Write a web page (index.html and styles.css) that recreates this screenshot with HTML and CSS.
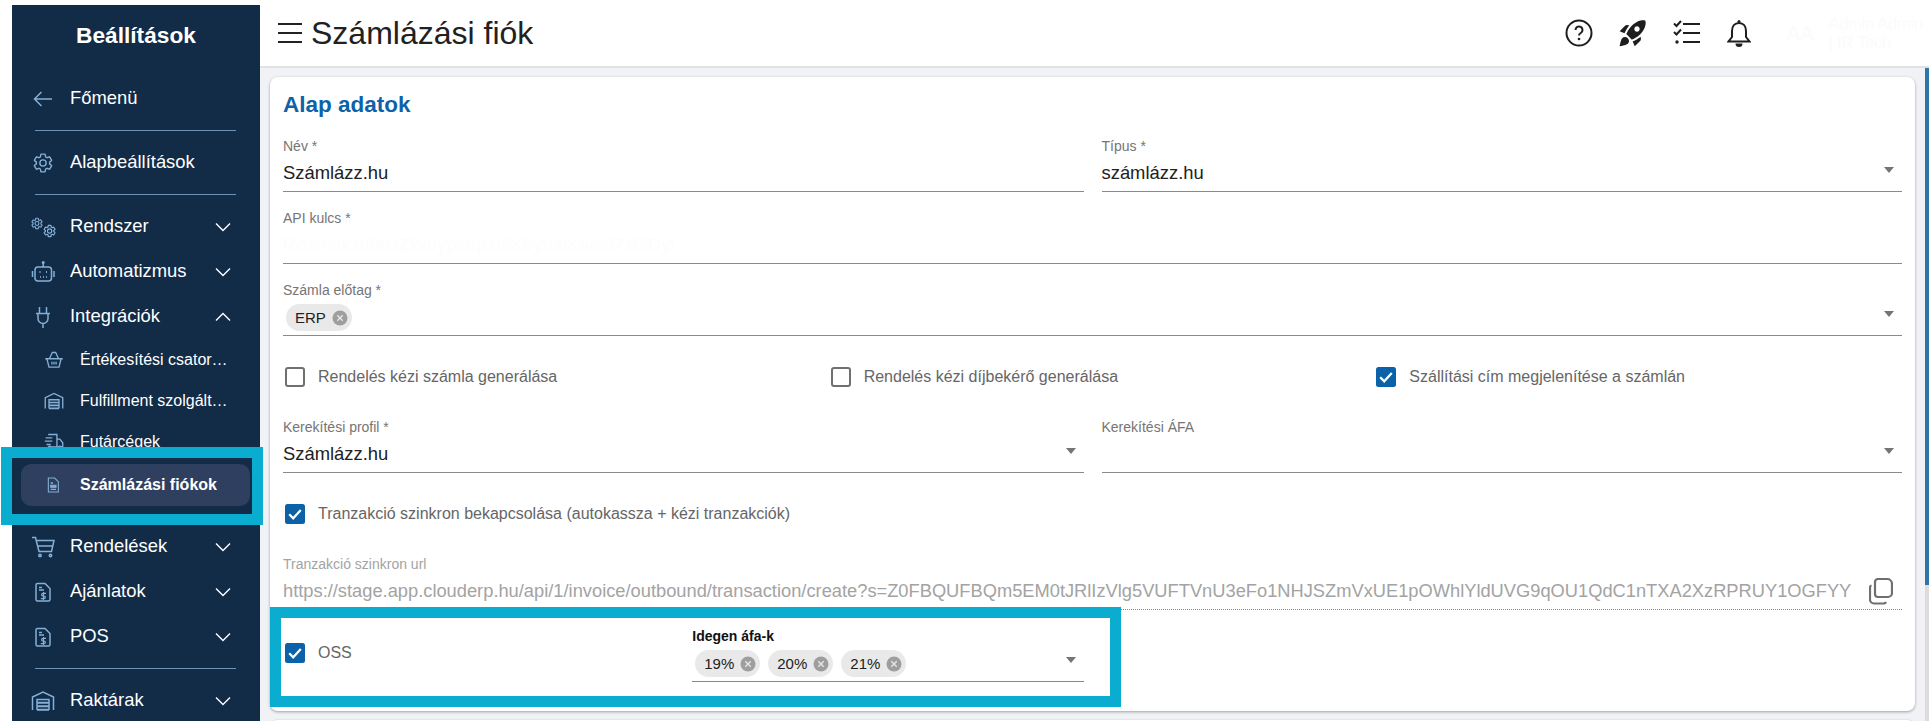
FILE: index.html
```html
<!DOCTYPE html>
<html lang="hu">
<head>
<meta charset="utf-8">
<title>Számlázási fiók</title>
<link rel="stylesheet" href="styles.css">
</head>
<body>
<svg class="defs" width="0" height="0" aria-hidden="true">
  <symbol id="chev-d" viewBox="0 0 16 16"><path d="M1 4.500l7 7 7-7"/></symbol>
  <symbol id="chev-u" viewBox="0 0 16 16"><path d="M1 11.500l7-7 7 7"/></symbol>
  <symbol id="gear" viewBox="-1 -1 26 26"><path d="M19.140 12.940c.04-.3.06-.61.06-.94 0-.32-.02-.64-.07-.94l2.030-1.580c.18-.14.23-.41.12-.61l-1.920-3.320c-.12-.22-.37-.29-.59-.22l-2.390.96c-.5-.38-1.030-.7-1.620-.94L14.400 2.810c-.04-.24-.24-.41-.48-.41h-3.840c-.24 0-.43.17-.47.41L9.250 5.350c-.59.24-1.130.57-1.620.94l-2.390-.96c-.22-.08-.47 0-.59.22L2.740 8.870c-.12.21-.08.47.12.61l2.030 1.580c-.05.3-.09.63-.09.94s.02.64.07.94l-2.030 1.580c-.18.14-.23.41-.12.61l1.920 3.320c.12.22.37.29.59.22l2.390-.96c.5.38 1.030.7 1.620.94l.36 2.540c.05.24.24.41.48.41h3.840c.24 0 .44-.17.47-.41l.36-2.540c.59-.24 1.130-.56 1.620-.94l2.390.96c.22.08.47 0 .59-.22l1.920-3.320c.12-.22.07-.47-.12-.61l-2.010-1.580z"/><circle cx="12" cy="12" r="3.400"/></symbol>
  <symbol id="gear-s" viewBox="0 0 24 24"><path stroke-width="2" d="M19.140 12.940c.04-.3.06-.61.06-.94 0-.32-.02-.64-.07-.94l2.030-1.580c.18-.14.23-.41.12-.61l-1.920-3.320c-.12-.22-.37-.29-.59-.22l-2.390.96c-.5-.38-1.030-.7-1.620-.94L14.400 2.810c-.04-.24-.24-.41-.48-.41h-3.840c-.24 0-.43.17-.47.41L9.250 5.350c-.59.24-1.130.57-1.620.94l-2.390-.96c-.22-.08-.47 0-.59.22L2.740 8.870c-.12.21-.08.47.12.61l2.030 1.580c-.05.3-.09.63-.09.94s.02.64.07.94l-2.030 1.580c-.18.14-.23.41-.12.61l1.920 3.320c.12.22.37.29.59.22l2.390-.96c.5.38 1.030.7 1.620.94l.36 2.540c.05.24.24.41.48.41h3.840c.24 0 .44-.17.47-.41l.36-2.540c.59-.24 1.130-.56 1.620-.94l2.390.96c.22.08.47 0 .59-.22l1.920-3.320c.12-.22.07-.47-.12-.61l-2.010-1.580z"/><circle cx="12" cy="12" r="3.600" stroke-width="2"/></symbol>
  <symbol id="warehouse" viewBox="0 0 24 24"><path d="M1.500 21V8L12 3l10.500 5v13"/><path d="M6 21V10.500h12V21"/><path d="M6 13.800h12M6 17.300h12M6 20.800h12" stroke-width="2"/></symbol>
  <symbol id="filedollar" viewBox="0 0 24 24"><path d="M6.500 3.500h7.500l5 5v11A1.500 1.500 0 0 1 17.500 21h-11A1.500 1.500 0 0 1 5 19.500V5A1.500 1.500 0 0 1 6.500 3.500z"/><path d="M8 7.500h3M8 10h5"/><path d="M15 13.300h-3a1.200 1.200 0 0 0 0 2.700h1a1.200 1.200 0 0 1 0 2.700H9.800M12.500 12v8" stroke-width="1.200"/></symbol>
  <symbol id="chipx" viewBox="0 0 16 16"><circle cx="8" cy="8" r="7.500" fill="#9e9e9e"/><path d="M5.300 5.300l5.400 5.400M10.700 5.300l-5.400 5.400" stroke="#e9e9e9" stroke-width="1.300" fill="none"/></symbol>
  <symbol id="check" viewBox="0 0 20 20"><rect x="0" y="0" width="20" height="20" rx="2.500" fill="#0b62a8"/><path d="M4.200 10.300l4 4 7.600-8.400" stroke="#fff" stroke-width="2.200" fill="none"/></symbol>
</svg>

<div class="app">
  <aside class="side">
    <h2 class="side-title">Beállítások</h2>
    <div class="row">
      <svg class="ic" viewBox="0 0 24 24"><path d="M21 12H3.500M10.500 5l-7 7 7 7"/></svg>
      <span class="tx">Főmenü</span>
    </div>
    <hr class="rule">
    <div class="row">
      <svg class="ic"><use href="#gear"/></svg>
      <span class="tx">Alapbeállítások</span>
    </div>
    <hr class="rule">
    <div class="row">
      <svg class="ic ic-over" viewBox="0 0 24 24"><use href="#gear-s" x="-0.500" y="2" width="13" height="13"/><use href="#gear-s" x="11.600" y="9" width="14" height="14"/></svg>
      <span class="tx">Rendszer</span>
      <svg class="chev"><use href="#chev-d"/></svg>
    </div>
    <div class="row">
      <svg class="ic ic-over" viewBox="0 0 24 24"><rect x="4" y="7" width="16.500" height="14" rx="3"/><path d="M12.200 7V3M1.500 11v6M23 11v6"/><circle cx="12.200" cy="2.500" r=".8"/><path d="M8.500 12h1M15 12h1M9 17h.8M12 17h.8M15 17h.8" stroke-width="2"/></svg>
      <span class="tx">Automatizmus</span>
      <svg class="chev"><use href="#chev-d"/></svg>
    </div>
    <div class="row">
      <svg class="ic" viewBox="0 0 24 24"><path d="M8.500 2v6M15.500 2v6M5 8.500h14M7 8.500v5a5 5 0 0 0 10 0v-5M12 18.500V23"/></svg>
      <span class="tx">Integrációk</span>
      <svg class="chev"><use href="#chev-u"/></svg>
    </div>
    <div class="sub">
      <svg class="ic-s" viewBox="0 0 24 24"><path d="M1.500 10.500h21M3.500 10.500l2.500 10h12l2.500-10M6.500 10.500L10 3h4l3.500 7.500M9.500 14v3.500M12 14v3.500M14.500 14v3.500"/></svg>
      <span class="tx-s">Értékesítési csatornák</span>
    </div>
    <div class="sub">
      <svg class="ic-s"><use href="#warehouse"/></svg>
      <span class="tx-s">Fulfillment szolgáltatók</span>
    </div>
    <div class="sub">
      <svg class="ic-s" viewBox="0 0 24 24"><path d="M5 3h10.500v15H9M15.500 8.500h3.500l3.500 4.500v5h-2M15.500 18h1.500M2 7h8M1 11h9M3 15h5"/><circle cx="7" cy="19" r="2"/><circle cx="19" cy="19" r="2"/></svg>
      <span class="tx-s">Futárcégek</span>
    </div>
    <div class="sub sub-active">
      <svg class="ic-s ic-file" viewBox="0 0 24 24"><path d="M5 1.500h9.500L20 7v15.500H5z"/><path d="M8.500 9h3.500M8.500 18.500h8" stroke-width="2"/><path d="M8.500 12.500h8v3h-8z" class="ic-fill"/></svg>
      <span class="tx-a">Számlázási fiókok</span>
    </div>
    <div class="row row-after">
      <svg class="ic" viewBox="0 0 24 24"><path d="M1 2.500h3.500l3.500 14h12.500L23 5.500H5.500M7 11h14.500"/><circle cx="9" cy="20.500" r="1.200"/><circle cx="19.500" cy="20.500" r="1.200"/></svg>
      <span class="tx">Rendelések</span>
      <svg class="chev"><use href="#chev-d"/></svg>
    </div>
    <div class="row">
      <svg class="ic"><use href="#filedollar"/></svg>
      <span class="tx">Ajánlatok</span>
      <svg class="chev"><use href="#chev-d"/></svg>
    </div>
    <div class="row">
      <svg class="ic"><use href="#filedollar"/></svg>
      <span class="tx">POS</span>
      <svg class="chev"><use href="#chev-d"/></svg>
    </div>
    <hr class="rule">
    <div class="row">
      <svg class="ic"><use href="#warehouse"/></svg>
      <span class="tx">Raktárak</span>
      <svg class="chev"><use href="#chev-d"/></svg>
    </div>
  </aside>

  <div class="main">
    <header class="top">
      <svg class="burger" viewBox="0 0 24 20"><path d="M0 1h24M0 10h24M0 19h24"/></svg>
      <h1 class="page-title">Számlázási fiók</h1>
      <div class="top-icons">
        <svg class="t-ic" viewBox="0 0 28 28"><circle cx="14" cy="14" r="12.500" class="t-st"/><path d="M10.500 11a3.500 3.500 0 1 1 5.300 3c-1.100.7-1.800 1.300-1.800 2.500" class="t-st"/><circle cx="14" cy="20" r="1.300" class="t-fl"/></svg>
        <svg class="t-ic t-rocket" viewBox="0 0 24 24"><path class="t-fl" d="M9.190 6.350c-2.040 2.290-3.440 5.580-3.570 5.890L2 10.690l4.050-4.050c.47-.47 1.150-.68 1.810-.55l1.330.26zM11.170 17s3.740-1.550 5.890-3.700c5.400-5.400 4.500-9.620 4.210-10.570-.95-.3-5.170-1.190-10.570 4.210C8.550 9.090 7 12.830 7 12.830L11.170 17zm6.480-2.190c-2.290 2.040-5.580 3.440-5.890 3.570L13.310 22l4.050-4.050c.47-.47.68-1.150.55-1.810l-.26-1.330zM9 18c0 .83-.34 1.580-.88 2.120C6.940 21.300 2 22 2 22s.7-4.940 1.880-6.120C4.420 15.340 5.170 15 6 15c1.660 0 3 1.340 3 3zm4-9c0-1.100.9-2 2-2s2 .9 2 2-.9 2-2 2-2-.9-2-2z"/></svg>
        <svg class="t-ic" viewBox="0 0 28 28"><path class="t-st" d="M10 5h17M10 14h17M10 23h17" stroke-width="2.400"/><path class="t-st" d="M1 4.500l2.500 2.500L8 2M1 13l2.500 2.500L8 10.500" stroke-width="2"/><circle cx="4" cy="23" r="1.700" class="t-fl"/></svg>
        <svg class="t-ic t-bell" viewBox="0 0 24 28"><path class="t-st" d="M12 4c-4.300 0-7 3.300-7 8v6l-3.500 4.500h21L19 18v-6c0-4.700-2.700-8-7-8z"/><circle cx="12" cy="2.500" r="1.500" class="t-fl"/><path class="t-fl" d="M8.500 24.500h7a3.500 3.500 0 0 1-7 0z"/></svg>
        <div class="user">
          <span class="avatar">AA</span>
          <div class="user-tx"><span class="u-name">Admin Admin</span><span class="u-org">| IR Tech</span></div>
        </div>
      </div>
    </header>

    <div class="content">
      <section class="card">
        <h3 class="card-title">Alap adatok</h3>
        <div class="grid2">
          <div class="field"><span class="lbl">Név *</span><span class="val">Számlázz.hu</span></div>
          <div class="field"><span class="lbl">Típus *</span><span class="val">számlázz.hu</span><i class="caret"></i></div>
        </div>
        <div class="field"><span class="lbl">API kulcs *</span><span class="val val-faded">Rozmokxn8tHZWdyjxfrqkh6K8ymtiKaeel7z0iDyt</span></div>
        <div class="field"><span class="lbl">Számla előtag *</span>
          <span class="chips"><span class="chip">ERP<svg class="chip-x"><use href="#chipx"/></svg></span></span><i class="caret"></i></div>
        <div class="grid3">
          <label class="cb"><span class="box"></span><span class="cb-t">Rendelés kézi számla generálása</span></label>
          <label class="cb"><span class="box"></span><span class="cb-t">Rendelés kézi díjbekérő generálása</span></label>
          <label class="cb"><svg class="box-on"><use href="#check"/></svg><span class="cb-t">Szállítási cím megjelenítése a számlán</span></label>
        </div>
        <div class="grid2">
          <div class="field"><span class="lbl">Kerekítési profil *</span><span class="val">Számlázz.hu</span><i class="caret"></i></div>
          <div class="field"><span class="lbl">Kerekítési ÁFA</span><span class="val"></span><i class="caret"></i></div>
        </div>
        <div class="cb-row">
          <label class="cb"><svg class="box-on"><use href="#check"/></svg><span class="cb-t">Tranzakció szinkron bekapcsolása (autokassza + kézi tranzakciók)</span></label>
        </div>
        <div class="field field-off">
          <span class="lbl">Tranzakció szinkron url</span>
          <span class="val val-off">https://stage.app.clouderp.hu/api/1/invoice/outbound/transaction/create?s=Z0FBQUFBQm5EM0tJRlIzVlg5VUFTVnU3eFo1NHJSZmVxUE1pOWhlYldUVG9qOU1QdC1nTXA2XzRPRUY1OGFYYzRhY</span>
          <svg class="copy" viewBox="0 0 24 27"><path d="M9 1h9a5 5 0 0 1 5 5v9a4 4 0 0 1-4 4H9a3 3 0 0 1-3-3V4a3 3 0 0 1 3-3z"/><path d="M2.500 7.500A2 2 0 0 0 1 9.500v12A4 4 0 0 0 5 25.500h10a2.500 2.500 0 0 0 2-1.500"/></svg>
        </div>
        <div class="grid2">
          <div class="oss">
            <label class="cb"><svg class="box-on"><use href="#check"/></svg><span class="cb-t">OSS</span></label>
            <div class="field">
              <span class="lbl lbl-strong">Idegen áfa-k</span>
              <span class="chips">
                <span class="chip">19%<svg class="chip-x"><use href="#chipx"/></svg></span>
                <span class="chip">20%<svg class="chip-x"><use href="#chipx"/></svg></span>
                <span class="chip">21%<svg class="chip-x"><use href="#chipx"/></svg></span>
              </span><i class="caret"></i>
            </div>
          </div>
        </div>
      </section>
      <section class="card card-next"></section>
    </div>
    <div class="scroll"></div>
  </div>
</div>
<div class="hl hl-side"></div>
<div class="hl hl-oss"></div>
</body>
</html>
```
FILE: styles.css
```css
* { box-sizing: border-box; }
html, body { margin: 0; height: 721px; overflow: hidden; background: #fff; }
body { font-family: "Liberation Sans", Arial, sans-serif; position: relative; color: #212121; }
.defs { position: absolute; }
.app { display: flex; height: 721px; padding-left: 12px; }

.side { width: 248px; flex: none; margin-top: 5px; background: #122b47; color: #fff; overflow: hidden; }
.side-title { margin: 0; height: 71px; padding-top: 16px; text-align: center; font-size: 22.7px; line-height: 28px; font-weight: 700; }
.row { height: 45px; display: flex; align-items: center; padding: 0 29px 0 15px; }
.ic { width: 24px; height: 24px; margin: 0 15px 0 4px; flex: none; fill: none; stroke: #85b0d6; stroke-width: 1.5; }
.ic-over { overflow: visible; }
.tx { flex: 1; font-size: 18.4px; color: #fff; white-space: nowrap; padding-bottom: 2px; }
.chev { width: 16px; height: 16px; flex: none; fill: none; stroke: #fff; stroke-width: 1.4; }
.rule { margin: 9px 24px 9px 23px; border: 0; height: 1px; background: #6d93b5; }
.sub { height: 41px; display: flex; align-items: center; padding-left: 32px; }
.ic-s { width: 20px; height: 20px; margin-right: 16px; flex: none; fill: none; stroke: #85b0d6; stroke-width: 1.6; }
.ic-fill { fill: #85b0d6; }
.tx-s { width: 152px; font-size: 16px; color: #fff; white-space: nowrap; overflow: hidden; text-overflow: ellipsis; }
.sub-active { height: 42px; margin: 2px 10px 0 9px; padding-left: 24px; background: #2f3f5f; border-radius: 10px; }
.ic-file { width: 16px; height: 18px; margin-right: 19px; }
.tx-a { font-size: 16px; font-weight: 700; color: #fff; white-space: nowrap; }
.row-after { margin-top: 18px; }

.main { flex: 1; min-width: 0; position: relative; }
.top { height: 68px; display: flex; align-items: center; padding-left: 18px; background: #fff; border-bottom: 2px solid #e2e2e2; }
.burger { width: 24px; height: 20px; flex: none; fill: none; stroke: #222; stroke-width: 2; }
.page-title { margin: 0 0 0 9px; font-size: 32px; font-weight: 400; color: #212121; line-height: 40px; }
.top-icons { margin-left: auto; display: flex; align-items: center; gap: 24px; }
.t-ic { width: 28px; height: 28px; flex: none; }
.t-rocket { width: 32px; height: 32px; }
.t-bell { width: 24px; height: 28px; margin: 0 5px 0 2px; }
.t-st { fill: none; stroke: #1e1e1e; stroke-width: 2; }
.t-fl { fill: #1e1e1e; }
.user { display: flex; align-items: center; gap: 15px; width: 142px; margin-left: 7px; color: #fbfbfb; }
.avatar { font-size: 20px; }
.user-tx { display: flex; flex-direction: column; font-size: 16px; line-height: 19px; }
.u-name, .u-org { white-space: nowrap; }

.content { height: 653px; background: #f0f2f6; padding: 9px 14px 0 10px; overflow: hidden; }
.scroll { position: absolute; right: 0; top: 68px; bottom: 0; width: 4px; background: linear-gradient(#2f75a8 0 517px, #dcdcdc 517px); }
.card { background: #fff; border-radius: 8px; padding: 0 13px; height: 634px; box-shadow: 0 1px 3px rgba(0,0,0,.35); }
.card-next { margin-top: 9px; height: 40px; }
.card-title { margin: 0; height: 59px; padding-top: 14px; font-size: 22.5px; line-height: 28px; font-weight: 700; color: #0e62a8; }

.grid2 { display: grid; grid-template-columns: 1fr 1fr; gap: 18px; margin-bottom: 16px; }
.grid3 { display: grid; grid-template-columns: repeat(3, 1fr); gap: 18px; height: 49px; margin-bottom: 16px; align-items: center; }
.cb-row { height: 49px; margin-bottom: 16px; display: flex; align-items: center; }
.field { position: relative; height: 56px; border-bottom: 1px solid #8a8a8a; display: flex; flex-direction: column; margin-bottom: 16px; min-width: 0; padding-top: 2px; }
.grid2 > .field, .oss > .field { margin-bottom: 0; }
.lbl { font-size: 14px; line-height: 16px; color: #757575; white-space: nowrap; }
.lbl-strong { color: #111; font-weight: 700; }
.val { font-size: 18.4px; line-height: 24px; margin-top: 7px; height: 24px; white-space: nowrap; color: #212121; }
.val-faded { color: #fdfdfd; }
.field-off { border-bottom: 1px dotted #8a8a8a; }
.val-off { color: #a3a3a3; overflow: hidden; width: 1568px; font-size: 18.3px; }
.field-off .lbl { color: #a3a3a3; }
.copy { position: absolute; right: 9px; top: 24px; width: 24px; height: 27px; fill: none; stroke: #6f6f6f; stroke-width: 2.2; }
.caret { position: absolute; right: 8px; top: 31px; width: 0; height: 0; border: 5.5px solid transparent; border-top: 6px solid #757575; border-bottom: 0; }

.chips { display: flex; gap: 8px; margin: 6px 0 0 3px; }
.chip { height: 27px; border-radius: 14px; background: #e9e9e9; display: inline-flex; align-items: center; gap: 6px; padding: 0 4px 0 9px; font-size: 15px; color: #212121; }
.chip-x { width: 16px; height: 16px; }

.cb { display: flex; align-items: center; gap: 13px; padding-left: 2px; }
.box { width: 20px; height: 20px; border: 2px solid #707070; border-radius: 3px; flex: none; }
.box-on { width: 20px; height: 20px; flex: none; }
.cb-t { font-size: 16px; color: #666; white-space: nowrap; }
.oss { display: grid; grid-template-columns: 1fr 1fr; gap: 18px; align-items: center; }
.oss > .cb { margin-bottom: 2px; }

.hl { position: absolute; border: 11px solid #0aaccf; }
.hl-side { left: 1px; top: 447px; width: 262px; height: 78px; }
.hl-oss { left: 270px; top: 607px; width: 851px; height: 100px; }
```
